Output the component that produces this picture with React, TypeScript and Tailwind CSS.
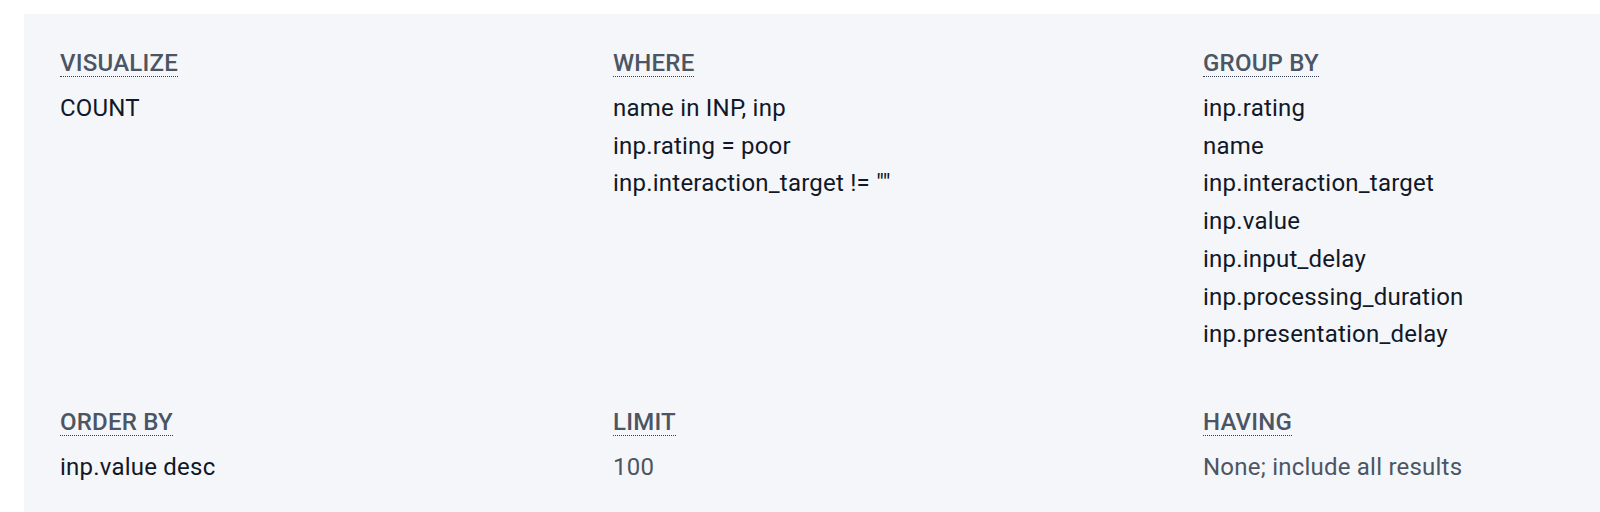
import React from 'react';

type Section = {
    label: string;
    values: string[];
    muted?: boolean;
};

const topRow: Section[] = [
    { label: 'Visualize', values: ['COUNT'] },
    { label: 'Where', values: ['name in INP, inp', 'inp.rating = poor', 'inp.interaction_target != ""'] },
    {
        label: 'Group by',
        values: [
            'inp.rating',
            'name',
            'inp.interaction_target',
            'inp.value',
            'inp.input_delay',
            'inp.processing_duration',
            'inp.presentation_delay',
        ],
    },
];

const bottomRow: Section[] = [
    { label: 'Order by', values: ['inp.value desc'] },
    { label: 'Limit', values: ['100'], muted: true },
    { label: 'Having', values: ['None; include all results'], muted: true },
];

const QueryBlock: React.FC<{ section: Section }> = ({ section }) => (
    <div className="flex flex-col items-start tracking-[0.22px]">
        <span className="inline-block text-[24px] leading-[25px] font-medium uppercase text-[#4b5563] border-b border-dotted border-[#374151] mb-[13px]">
            {section.label}
        </span>
        {section.values.map((v) => (
            <div
                key={v}
                className={`text-[24px] leading-[37.7px] ${section.muted ? 'text-[#4b5563]' : 'text-[#111827]'}`}
            >
                {v}
            </div>
        ))}
    </div>
);

export default function App() {
    return (
        <div className="w-[1600px] h-[512px] bg-white overflow-hidden" style={{ fontFamily: 'Roboto, "Liberation Sans", sans-serif' }}>
            <div className="ml-[24px] mt-[14px] h-[498px] bg-[#f5f6fa] pl-[36px] pt-[37px]">
                <div className="grid grid-cols-[553px_590px_1fr] gap-y-[56px]">
                    {topRow.map((s) => (
                        <QueryBlock key={s.label} section={s} />
                    ))}
                    {bottomRow.map((s) => (
                        <QueryBlock key={s.label} section={s} />
                    ))}
                </div>
            </div>
        </div>
    );
}
